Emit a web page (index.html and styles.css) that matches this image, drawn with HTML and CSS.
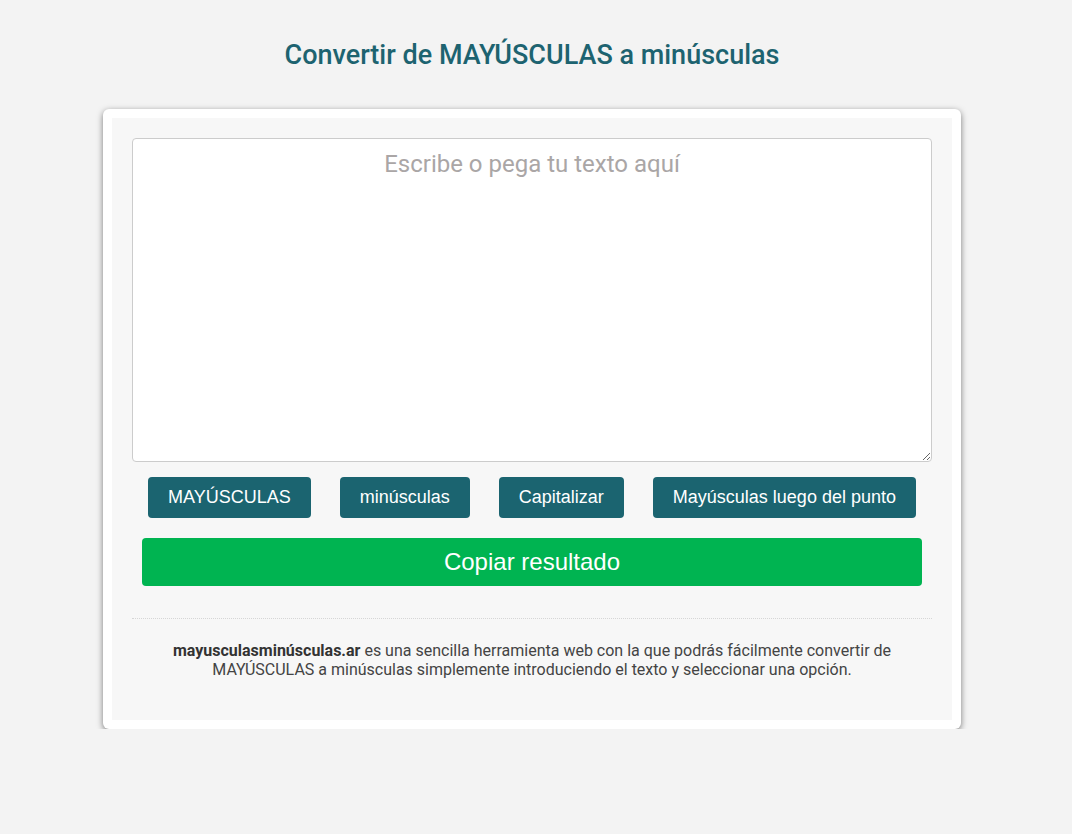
FILE: index.html
```html
<!DOCTYPE html>
<html lang="es">
<head>
<meta charset="utf-8">
<title>Convertir de MAYÚSCULAS a minúsculas</title>
<link rel="stylesheet" href="styles.css">
</head>
<body>
<div class="page">
  <h1 class="title">Convertir de MAYÚSCULAS a minúsculas</h1>
  <div class="card">
    <div class="panel">
      <textarea class="input" placeholder="Escribe o pega tu texto aquí"></textarea>
      <div class="actions">
        <button class="btn">MAYÚSCULAS</button>
        <button class="btn">minúsculas</button>
        <button class="btn">Capitalizar</button>
        <button class="btn">Mayúsculas luego del punto</button>
      </div>
      <button class="copy">Copiar resultado</button>
      <hr class="sep">
      <p class="info"><strong>mayusculasminúsculas.ar</strong> es una sencilla herramienta web con la que podrás fácilmente convertir de<br>MAYÚSCULAS a minúsculas simplemente introduciendo el texto y seleccionar una opción.</p>
    </div>
  </div>
</div>
</body>
</html>
```
FILE: styles.css
```css
html, body {
  margin: 0;
  padding: 0;
  background: #f3f3f3;
}
body {
  font-family: Roboto, "Liberation Sans", Arial, sans-serif;
}
.page {
  width: 1064px;
  display: flex;
  flex-direction: column;
  align-items: center;
  padding-top: 38px;
}
.title {
  margin: 0;
  font-size: 27px;
  font-weight: 500;
  color: #1d6370;
  line-height: 34px;
  text-align: center;
}
.card {
  margin-top: 37px;
  width: 840px;
  padding: 9px;
  background: #fff;
  border-radius: 6px;
  box-shadow: 0 2px 6px rgba(0,0,0,0.5);
}
.panel {
  background: #f7f7f7;
  padding: 20px 20px 41px;
  display: flex;
  flex-direction: column;
}
.input {
  box-sizing: border-box;
  width: 800px;
  height: 324px;
  margin: 0;
  border: 1px solid #cccccc;
  border-radius: 4px;
  background: #fff;
  padding: 10px;
  font-family: Roboto, "Liberation Sans", sans-serif;
  font-size: 24px;
  line-height: 30px;
  text-align: center;
  color: #333;
  display: block;
}
.input::placeholder {
  color: #aaa6a6;
  opacity: 1;
}
.actions {
  display: flex;
  justify-content: center;
  gap: 29px;
  margin-top: 15px;
}
.btn {
  font-family: "Liberation Sans", Arial, sans-serif;
  font-size: 18px;
  color: #fff;
  background: #1b6470;
  border: none;
  border-radius: 4px;
  height: 41px;
  padding: 0 20px;
  cursor: pointer;
}
.copy {
  margin: 20px 10px 0;
  height: 48px;
  background: #00b451;
  color: #fff;
  border: none;
  border-radius: 4px;
  font-family: "Liberation Sans", Arial, sans-serif;
  font-size: 24px;
  cursor: pointer;
}
.sep {
  margin: 32px 0 0;
  border: none;
  border-top: 1px dotted #d6d6d6;
  height: 0;
}
.info {
  margin: 22px auto 0;
  max-width: 760px;
  font-size: 16px;
  line-height: 19px;
  color: #444;
  text-align: center;
}
.info strong {
  color: #333;
  font-weight: 700;
}
```
